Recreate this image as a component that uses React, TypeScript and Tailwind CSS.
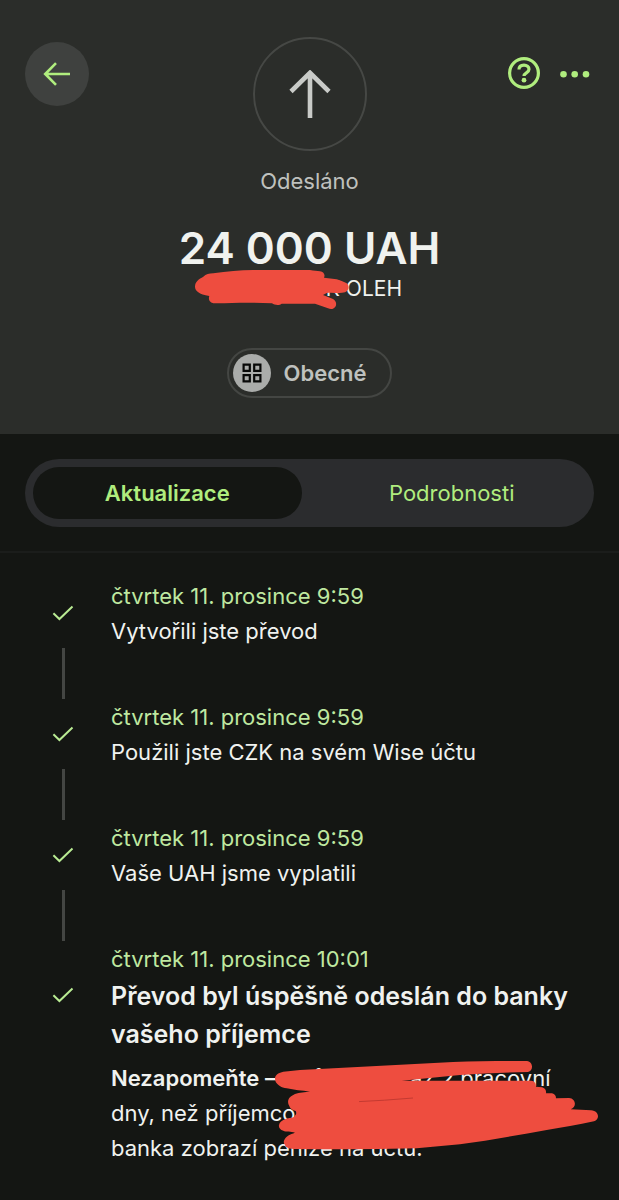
import { useState } from "react";

type Step = { date: string; text: string };

const steps: Step[] = [
  { date: "čtvrtek 11. prosince 9:59", text: "Vytvořili jste převod" },
  { date: "čtvrtek 11. prosince 9:59", text: "Použili jste CZK na svém Wise účtu" },
  { date: "čtvrtek 11. prosince 9:59", text: "Vaše UAH jsme vyplatili" },
];

function Check() {
  return (
    <svg viewBox="0 0 22 16" className="h-4 w-[22px]" fill="none" stroke="#b9eb93" strokeWidth="2" aria-hidden="true">
      <path d="M1.4 8.2 7.4 14 20.5 1.6" />
    </svg>
  );
}

function NameRedaction() {
  return (
    <svg viewBox="0 0 154 40" className="absolute top-[-5px] left-[-22px] h-10 w-[154px]" fill="#ee4d3f" aria-hidden="true">
      <path d="M0 16.700C0 11.500 4 9 8.300 6.700 11 4 14 3.600 18.300 3.300 32 1.200 45 .2 58 0H115C119 .6 122 1 125 1.200 129 1.800 130.400 5 129 7.700L141.700 9.300C146 10.500 149 12 151.700 13.300 154.500 15.500 154.500 20.500 150 22.300 144 24 138 22 131.700 23L128 25 138 29C142 31 142.400 37 138 38.700 136.500 39.200 134.500 39 133 38.300L120 33.700H86.700C85 35.300 80 35.500 77 33.300L55 32.700C42 32.600 30 33.500 18.300 33.300 14 32.500 13.300 29 14.300 26 9 25 5.500 24.500 3.300 22.300 1 20.500 0 19 0 16.700Z" />
    </svg>
  );
}

function NoteRedaction() {
  return (
    <svg viewBox="0 0 325 90" className="absolute top-0 left-[163px] h-[90px] w-[325px]" fill="#ee4d3f" aria-hidden="true">
      <path d="M1 17.300C1 14 5 11.500 9.300 10.700L26 9 179 .9C204 0 230 0 253 0 259 .5 260 9.500 254 11 231 11.500 208 12.500 186 14L127.700 19.700H257C261 20 262 22.500 262 25.700L268 26.300C271 27 272.500 29.500 272 32.300L278 32.300C281 33 282 35 282 37.300L295 37C302 37.500 303 46 296.700 48.300L317 49.300C325.500 50 326 58.500 320 60.300 304 64 288 66.500 272.700 69 244 74 215 79.500 186 83.300L142.700 87.300C103 88.300 63 88.500 22.700 88 15 88 11.500 86.500 11 84 9.500 82.500 9.500 80.500 10.300 79 12 75 16 73.500 21 71.700 17 70 12 71.500 9.300 69.700 6 68.500 4.500 66.500 5 64 5.500 61 8 59.500 11 58.300 14 57 17 57 19.300 56.300 22 54.500 23 52 21.700 50 18 49 16 47.500 15.300 45 14 43 13.800 41 14.300 39 15 36 18 34.500 21 33 25.500 31.500 31 31 36 30.700 28 29.500 20 29 12.700 27.300 7 26.500 4.500 24.500 2.700 22.300 1.500 21 1 19.500 1 17.300Z" />
      <path d="M85 40.600q24-1 54-3.600" fill="none" stroke="#c43a31" strokeWidth="1" />
    </svg>
  );
}

export default function App() {
  const [tab, setTab] = useState<"updates" | "details">("updates");
  const label = (active: boolean) =>
    active
      ? "h-[52px] w-full rounded-full bg-[#141613] font-semibold"
      : "h-[52px] w-full rounded-full font-normal";

  return (
    <main className="min-h-screen bg-[#141613] font-['Inter',sans-serif] text-[22px] text-[#f0f2ef]">
      <header className="flex flex-col items-center bg-[#2b2d2a] pt-[37px] pb-9">
        <div className="grid w-full grid-cols-[1fr_auto_1fr] items-start px-[25px]">
          <button aria-label="Zpět" className="mt-[5px] flex size-16 items-center justify-center rounded-full bg-[#3f413f]">
            <svg viewBox="0 0 28 24" className="h-6 w-7" fill="none" stroke="#b0ed7e" strokeWidth="2.600" aria-hidden="true">
              <path d="M27 12H2M13 1.200 2.200 12 13 22.800" />
            </svg>
          </button>
          <div className="flex size-[114px] items-center justify-center rounded-full border-2 border-[#464845]">
            <svg viewBox="0 0 42 48" className="h-12 w-[42px]" fill="none" stroke="#c9cbc8" strokeWidth="4.600" aria-hidden="true">
              <path d="M21 48V3M2 21.500 21 2.800 40 21.500" />
            </svg>
          </div>
          <div className="mt-5 flex items-center gap-5 justify-self-end pr-1">
            <button aria-label="Nápověda">
              <svg viewBox="0 0 32 32" className="size-8" fill="none" stroke="#b0ed7e" strokeWidth="3.200" aria-hidden="true">
                <circle cx="16" cy="16" r="14.400" />
                <path d="M11 12.600C11 9.700 13.200 8.200 16 8.200s5 1.700 5 4.100c0 3.700-5 3.400-5 6.800" />
                <circle cx="16" cy="23.200" r="2.400" fill="#b0ed7e" stroke="none" />
              </svg>
            </button>
            <button aria-label="Další možnosti">
              <svg viewBox="0 0 30 10" className="h-2.5 w-[30px]" fill="#b0ed7e" aria-hidden="true">
                <circle cx="3.500" cy="6.300" r="3.300" />
                <circle cx="14.700" cy="6.300" r="3.300" />
                <circle cx="26" cy="6.300" r="3.300" />
              </svg>
            </button>
          </div>
        </div>
        <p className="mt-4 leading-7 text-[#bfc1be]">Odesláno</p>
        <h1 className="mt-[26px] text-[44px] leading-[54px] font-semibold">24 000 UAH</h1>
        <p className="relative w-[185px] text-right text-[21px] leading-7">
          K OLEH
          <NameRedaction />
        </p>
        <button className="mt-[45px] flex h-[50px] items-center gap-[13px] rounded-full border-2 border-[#444643] pr-6 pl-1 font-semibold text-[#bfc1be]">
          <span className="flex size-[38px] items-center justify-center rounded-full bg-[#aaacaa]">
            <svg viewBox="0 0 20 20" className="size-5" fill="none" stroke="#080908" strokeWidth="2.200" aria-hidden="true">
              <path d="M1.600 1.600h6.200v6.200H1.600zM12.200 1.600h6.200v6.200h-6.200zM1.600 12.200h6.200v6.200H1.600zM12.200 12.200h6.200v6.200h-6.200z" />
            </svg>
          </span>
          Obecné
        </button>
      </header>

      <nav className="border-b-2 border-[#1b1d1b] px-[25px] pt-[25px] pb-6">
        <div role="tablist" className="grid grid-cols-2 rounded-full bg-[#2b2c2e] text-[#b0ed7e]">
          <div className="p-2">
            <button role="tab" aria-selected={tab === "updates"} onClick={() => setTab("updates")} className={label(tab === "updates")}>
              Aktualizace
            </button>
          </div>
          <div className="p-2">
            <button role="tab" aria-selected={tab === "details"} onClick={() => setTab("details")} className={label(tab === "details")}>
              Podrobnosti
            </button>
          </div>
        </div>
      </nav>

      <ol className="px-6 pt-[26px] pb-7">
        {steps.map((step, i) => (
          <li key={i} className="grid grid-cols-[78px_1fr] gap-x-[9px] pb-[51px]">
            <div className="-mb-[51px] flex flex-col items-center pt-[26px]">
              <Check />
              <span className="mt-[27px] h-[51px] w-[3px] bg-[#444643]" />
            </div>
            <div className="leading-[35px]">
              <p className="text-[#bfe8a0]">{step.date}</p>
              <p>{step.text}</p>
            </div>
          </li>
        ))}
        <li className="grid grid-cols-[78px_1fr] gap-x-[9px]">
          <div className="flex justify-center pt-[45px]">
            <Check />
          </div>
          <div className="leading-[35px]">
            <p className="text-[#bfe8a0]">čtvrtek 11. prosince 10:01</p>
            <h2 className="text-[25px] leading-[38px] font-semibold">Převod byl úspěšně odeslán do banky vašeho příjemce</h2>
            <p className="relative mt-2">
              <strong className="font-semibold">Nezapomeňte —</strong> může trvat až 2 pracovní
              <br />
              dny, než příjemcova
              <br />
              banka zobrazí peníze na účtu.
              <NoteRedaction />
            </p>
          </div>
        </li>
      </ol>
    </main>
  );
}
